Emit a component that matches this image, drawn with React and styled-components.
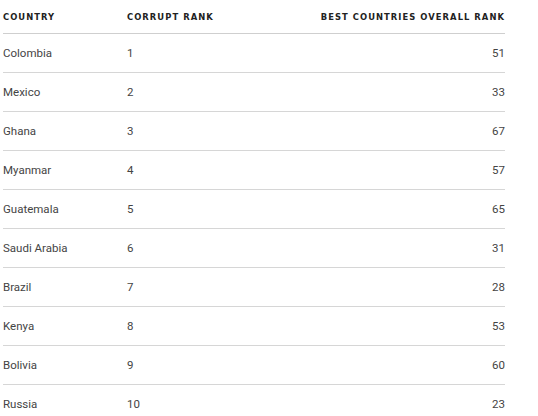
import React from "react";
import styled, { createGlobalStyle } from "styled-components";

const Global = createGlobalStyle`
  html, body { margin: 0; padding: 0; background: #fff; }
  body { overflow: hidden; }
`;

const Wrap = styled.div`
  padding: 0 0 0 3px;
  width: 502px;
`;

const Table = styled.table`
  width: 502px;
  border-collapse: collapse;
  font-family: Roboto, "Liberation Sans", sans-serif;
`;

const Th = styled.th`
  height: 33px;
  padding: 0;
  text-align: ${(p) => p.$align || "left"};
  width: ${(p) => p.$w || "auto"};
  font-family: "DejaVu Sans", sans-serif;
  font-weight: bold;
  font-size: 8.4px;
  letter-spacing: 1.05px;
  color: #222;
  border-bottom: 1px solid #cfcfcf;
  vertical-align: middle;
`;

const Td = styled.td`
  height: 38px;
  padding: 0;
  text-align: ${(p) => p.$align || "left"};
  font-size: 11.5px;
  color: #444;
  border-bottom: 1px solid #d6d6d6;
  vertical-align: middle;
`;

const rows = [
  ["Colombia", 1, 51],
  ["Mexico", 2, 33],
  ["Ghana", 3, 67],
  ["Myanmar", 4, 57],
  ["Guatemala", 5, 65],
  ["Saudi Arabia", 6, 31],
  ["Brazil", 7, 28],
  ["Kenya", 8, 53],
  ["Bolivia", 9, 60],
  ["Russia", 10, 23],
];

export default function App() {
  return (
    <Wrap>
      <Global />
      <Table>
        <thead>
          <tr>
            <Th $w="124px">COUNTRY</Th>
            <Th>CORRUPT RANK</Th>
            <Th $align="right">BEST COUNTRIES OVERALL RANK</Th>
          </tr>
        </thead>
        <tbody>
          {rows.map(([c, r, b]) => (
            <tr key={c}>
              <Td>{c}</Td>
              <Td>{r}</Td>
              <Td $align="right">{b}</Td>
            </tr>
          ))}
        </tbody>
      </Table>
    </Wrap>
  );
}
